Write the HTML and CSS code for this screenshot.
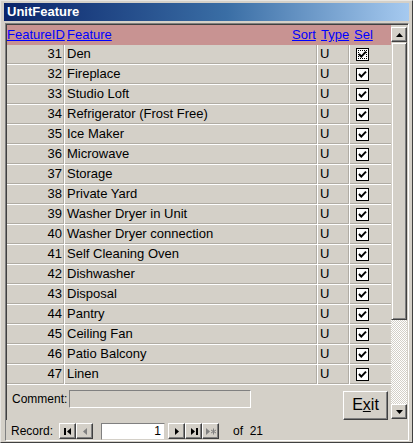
FILE: index.html
```html
<!DOCTYPE html>
<html>
<head>
<meta charset="utf-8">
<link rel="stylesheet" href="styles.css">
</head>
<body>
<div class="win">
  <div class="title">UnitFeature</div>
  <div class="form">
    <div class="main">
      <div class="grid">
        <div class="hdr">
          <a class="h-id">FeatureID</a>
          <a class="h-feat">Feature</a>
          <a class="h-sort">Sort</a>
          <a class="h-type">Type</a>
          <a class="h-sel">Sel</a>
        </div>
        <div class="rows">
          <div class="row"><div class="c-id">31</div><div class="c-feat">Den</div><div class="c-type">U</div><div class="c-sel"><span class="chk focus"><svg viewBox="0 0 11 11"><path d="M2 5 L4.3 7.6 L9 2.6"/></svg></span></div></div>
          <div class="row"><div class="c-id">32</div><div class="c-feat">Fireplace</div><div class="c-type">U</div><div class="c-sel"><span class="chk"><svg viewBox="0 0 11 11"><path d="M2 5 L4.3 7.6 L9 2.6"/></svg></span></div></div>
          <div class="row"><div class="c-id">33</div><div class="c-feat">Studio Loft</div><div class="c-type">U</div><div class="c-sel"><span class="chk"><svg viewBox="0 0 11 11"><path d="M2 5 L4.3 7.6 L9 2.6"/></svg></span></div></div>
          <div class="row"><div class="c-id">34</div><div class="c-feat">Refrigerator (Frost Free)</div><div class="c-type">U</div><div class="c-sel"><span class="chk"><svg viewBox="0 0 11 11"><path d="M2 5 L4.3 7.6 L9 2.6"/></svg></span></div></div>
          <div class="row"><div class="c-id">35</div><div class="c-feat">Ice Maker</div><div class="c-type">U</div><div class="c-sel"><span class="chk"><svg viewBox="0 0 11 11"><path d="M2 5 L4.3 7.6 L9 2.6"/></svg></span></div></div>
          <div class="row"><div class="c-id">36</div><div class="c-feat">Microwave</div><div class="c-type">U</div><div class="c-sel"><span class="chk"><svg viewBox="0 0 11 11"><path d="M2 5 L4.3 7.6 L9 2.6"/></svg></span></div></div>
          <div class="row"><div class="c-id">37</div><div class="c-feat">Storage</div><div class="c-type">U</div><div class="c-sel"><span class="chk"><svg viewBox="0 0 11 11"><path d="M2 5 L4.3 7.6 L9 2.6"/></svg></span></div></div>
          <div class="row"><div class="c-id">38</div><div class="c-feat">Private Yard</div><div class="c-type">U</div><div class="c-sel"><span class="chk"><svg viewBox="0 0 11 11"><path d="M2 5 L4.3 7.6 L9 2.6"/></svg></span></div></div>
          <div class="row"><div class="c-id">39</div><div class="c-feat">Washer Dryer in Unit</div><div class="c-type">U</div><div class="c-sel"><span class="chk"><svg viewBox="0 0 11 11"><path d="M2 5 L4.3 7.6 L9 2.6"/></svg></span></div></div>
          <div class="row"><div class="c-id">40</div><div class="c-feat">Washer Dryer connection</div><div class="c-type">U</div><div class="c-sel"><span class="chk"><svg viewBox="0 0 11 11"><path d="M2 5 L4.3 7.6 L9 2.6"/></svg></span></div></div>
          <div class="row"><div class="c-id">41</div><div class="c-feat">Self Cleaning Oven</div><div class="c-type">U</div><div class="c-sel"><span class="chk"><svg viewBox="0 0 11 11"><path d="M2 5 L4.3 7.6 L9 2.6"/></svg></span></div></div>
          <div class="row"><div class="c-id">42</div><div class="c-feat">Dishwasher</div><div class="c-type">U</div><div class="c-sel"><span class="chk"><svg viewBox="0 0 11 11"><path d="M2 5 L4.3 7.6 L9 2.6"/></svg></span></div></div>
          <div class="row"><div class="c-id">43</div><div class="c-feat">Disposal</div><div class="c-type">U</div><div class="c-sel"><span class="chk"><svg viewBox="0 0 11 11"><path d="M2 5 L4.3 7.6 L9 2.6"/></svg></span></div></div>
          <div class="row"><div class="c-id">44</div><div class="c-feat">Pantry</div><div class="c-type">U</div><div class="c-sel"><span class="chk"><svg viewBox="0 0 11 11"><path d="M2 5 L4.3 7.6 L9 2.6"/></svg></span></div></div>
          <div class="row"><div class="c-id">45</div><div class="c-feat">Ceiling Fan</div><div class="c-type">U</div><div class="c-sel"><span class="chk"><svg viewBox="0 0 11 11"><path d="M2 5 L4.3 7.6 L9 2.6"/></svg></span></div></div>
          <div class="row"><div class="c-id">46</div><div class="c-feat">Patio Balcony</div><div class="c-type">U</div><div class="c-sel"><span class="chk"><svg viewBox="0 0 11 11"><path d="M2 5 L4.3 7.6 L9 2.6"/></svg></span></div></div>
          <div class="row"><div class="c-id">47</div><div class="c-feat">Linen</div><div class="c-type">U</div><div class="c-sel"><span class="chk"><svg viewBox="0 0 11 11"><path d="M2 5 L4.3 7.6 L9 2.6"/></svg></span></div></div>
        </div>
        <div class="foot">
          <span class="lbl">Comment:</span>
          <div class="comment"></div>
          <div class="exit">E<u>x</u>it</div>
        </div>
      </div>
      <div class="vscroll">
        <div class="sbtn"><svg viewBox="0 0 7 4"><path d="M3.5 0 L7 4 L0 4Z"/></svg></div>
        <div class="track"><div class="thumb"></div></div>
        <div class="sbtn"><svg viewBox="0 0 7 4"><path d="M0 0 L7 0 L3.5 4Z"/></svg></div>
      </div>
    </div>
    <div class="nav">
      <span class="rec">Record:</span>
      <div class="nbtns">
        <div class="nb"><svg viewBox="0 0 8 7"><rect x="0" y="0" width="2" height="7"/><path d="M7 0 L7 7 L3 3.5Z"/></svg></div>
        <div class="nb dis"><svg viewBox="0 0 8 7"><path d="M6 0 L6 7 L2 3.5Z"/></svg></div>
      </div>
      <div class="recbox">1</div>
      <div class="nbtns">
        <div class="nb"><svg viewBox="0 0 8 7"><path d="M2 0 L2 7 L6 3.5Z"/></svg></div>
        <div class="nb"><svg viewBox="0 0 8 7"><path d="M1 0 L1 7 L5 3.5Z"/><rect x="6" y="0" width="2" height="7"/></svg></div>
        <div class="nb dis"><svg viewBox="0 0 10 7"><path d="M0 0 L0 7 L4 3.5Z"/><path d="M7.5 0.5 V6.5 M5 2 L10 5 M5 5 L10 2" class="star"/></svg></div>
      </div>
      <span class="of">of&nbsp; 21</span>
    </div>
  </div>
</div>
</body>
</html>
```
FILE: styles.css
```css
* { box-sizing: border-box; }
html, body { margin: 0; padding: 0; }
body {
  width: 413px;
  height: 443px;
  overflow: hidden;
  background: #d4d0c8;
  font-family: "Liberation Sans", Arial, sans-serif;
  font-size: 13px;
  color: #000;
}
.win {
  width: 413px;
  height: 443px;
  padding: 3px 3px 1px 4px;
  background: #d4d0c8;
  border-left: 1px solid #e8e6e2;
  border-top: 1px solid #e8e6e2;
  border-right: 1px solid #404040;
  border-bottom: 1px solid #404040;
  display: flex;
  flex-direction: column;
}
.title {
  height: 18px;
  margin: -1px 0 0 -1px;
  padding-left: 3px;
  background: linear-gradient(90deg, #0a246a 0%, #3a6ea5 55%, #a6caf0 100%);
  color: #fff;
  font-weight: bold;
  font-size: 13px;
  line-height: 18px;
}
.form {
  margin-top: 2px;
  flex: 1;
  border-left: 1px solid #808080;
  border-top: 1px solid #808080;
  border-right: 1px solid #fff;
  border-bottom: 1px solid #fff;
  display: flex;
  flex-direction: column;
}
.main {
  display: flex;
  border-left: 1px solid #404040;
  border-top: 1px solid #404040;
}
.grid {
  width: 384px;
  display: flex;
  flex-direction: column;
}
.hdr {
  height: 20px;
  background: #c89392;
  display: flex;
  align-items: center;
}
.hdr a {
  color: #0000ff;
  text-decoration: underline;
  white-space: nowrap;
  line-height: 16px;
}
.h-id { width: 60px; }
.h-feat { width: 225px; }
.h-sort { width: 29px; }
.h-type { width: 33px; }
.row {
  height: 20px;
  display: flex;
  border-bottom: 1px solid #fff;
  box-shadow: inset 0 -1px 0 #b0aca4;
}
.row > div { line-height: 18px; white-space: nowrap; }
.c-id {
  width: 58px;
  text-align: right;
  padding-right: 2px;
  border-right: 1px solid #fff;
  box-shadow: inset -1px 0 0 #b0aca4;
}
.c-feat {
  width: 253px;
  padding-left: 2px;
  border-right: 1px solid #fff;
  box-shadow: inset -1px 0 0 #b0aca4;
}
.c-type {
  width: 32px;
  padding-left: 2px;
  border-right: 1px solid #fff;
  box-shadow: inset -1px 0 0 #b0aca4;
}
.c-sel {
  flex: 1;
  display: flex;
  align-items: center;
  padding-left: 6px;
}
.chk {
  width: 13px;
  height: 13px;
  background: #fff;
  border: 1px solid #000;
  display: block;
}
.chk svg { width: 11px; height: 11px; display: block; }
.chk path { fill: none; stroke: #000; stroke-width: 2; }
.chk.focus { outline: 1px dotted #000; outline-offset: -3px; }
.foot {
  flex: 1;
  display: flex;
  align-items: flex-start;
  padding: 5px 0 0 5px;
}
.lbl { margin-top: 2px; width: 57px; font-size: 12px; }
.comment {
  width: 182px;
  height: 18px;
  border-top: 1px solid #808080;
  border-left: 1px solid #808080;
  border-right: 1px solid #fff;
  border-bottom: 1px solid #fff;
}
.exit {
  margin-left: 92px;
  margin-top: 1px;
  width: 45px;
  height: 29px;
  border-top: 1px solid #fff;
  border-left: 1px solid #fff;
  border-right: 1px solid #404040;
  border-bottom: 1px solid #404040;
  box-shadow: inset -1px -1px 0 #808080;
  text-align: center;
  line-height: 26px;
  font-size: 16px;
}
.vscroll {
  width: 16px;
  display: flex;
  flex-direction: column;
  padding-top: 2px;
  padding-bottom: 1px;
}
.sbtn {
  height: 15px;
  border-top: 1px solid #fff;
  border-left: 1px solid #fff;
  border-right: 1px solid #404040;
  border-bottom: 1px solid #404040;
  box-shadow: inset -1px -1px 0 #808080;
  display: flex;
  align-items: center;
  justify-content: center;
}
.sbtn svg { width: 7px; height: 4px; display: block; }
.track {
  flex: 1;
  background-color: #fff;
  background-image: repeating-conic-gradient(#d4d0c8 0 25%, #fff 0 50%);
  background-size: 2px 2px;
  display: flex;
  flex-direction: column;
}
.thumb {
  height: 278px;
  background: #d4d0c8;
  border-top: 1px solid #d4d0c8;
  border-left: 1px solid #d4d0c8;
  border-right: 1px solid #404040;
  border-bottom: 1px solid #404040;
  box-shadow: inset 1px 1px 0 #fff, inset -1px -1px 0 #808080;
}
.nav {
  flex: 1;
  display: flex;
  align-items: center;
  padding: 2px 0 0 5px;
  font-size: 12px;
}
.rec { width: 48px; }
.nbtns { display: flex; }
.nb {
  width: 17px;
  height: 16px;
  border-top: 1px solid #fff;
  border-left: 1px solid #fff;
  border-right: 1px solid #404040;
  border-bottom: 1px solid #404040;
  box-shadow: inset -1px -1px 0 #808080;
  display: flex;
  align-items: center;
  justify-content: center;
}
.nb svg { height: 7px; width: 8px; display: block; }
.nb.dis svg { fill: #808080; }
.nb.dis:last-child svg { width: 10px; }
.star { stroke: #808080; stroke-width: 1; fill: none; }
.recbox {
  width: 64px;
  height: 17px;
  margin: 0 3px 0 8px;
  background: #fff;
  border-top: 1px solid #808080;
  border-left: 1px solid #808080;
  border-right: 1px solid #d4d0c8;
  border-bottom: 1px solid #d4d0c8;
  text-align: right;
  padding-right: 3px;
  line-height: 15px;
}
.of { margin-left: 14px; }
```
